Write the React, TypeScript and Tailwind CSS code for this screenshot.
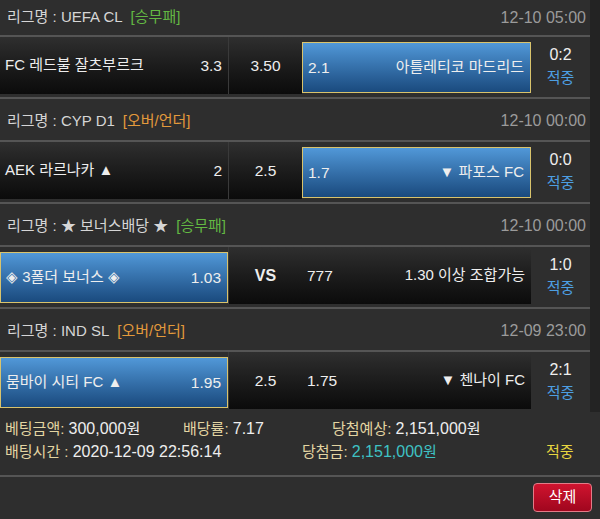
import React from "react"

type Side = {
  name: string
  odds: string
  blue?: boolean
}

type Bet = {
  league: string
  tag: string
  tagColor: string
  date: string
  home: Side
  mid: string
  midBold?: boolean
  away: Side
  score: string
}

const bets: Bet[] = [
  {
    league: "리그명 : UEFA CL",
    tag: "[승무패]",
    tagColor: "text-[#63b843]",
    date: "12-10 05:00",
    home: { name: "FC 레드불 잘츠부르크", odds: "3.3" },
    mid: "3.50",
    away: { name: "아틀레티코 마드리드", odds: "2.1", blue: true },
    score: "0:2",
  },
  {
    league: "리그명 : CYP D1",
    tag: "[오버/언더]",
    tagColor: "text-[#e39a3c]",
    date: "12-10 00:00",
    home: { name: "AEK 라르나카 ▲", odds: "2" },
    mid: "2.5",
    away: { name: "▼ 파포스 FC", odds: "1.7", blue: true },
    score: "0:0",
  },
  {
    league: "리그명 : ★ 보너스배당 ★",
    tag: "[승무패]",
    tagColor: "text-[#63b843]",
    date: "12-10 00:00",
    home: { name: "◈ 3폴더 보너스 ◈", odds: "1.03", blue: true },
    mid: "VS",
    midBold: true,
    away: { name: "1.30 이상 조합가능", odds: "777" },
    score: "1:0",
  },
  {
    league: "리그명 : IND SL",
    tag: "[오버/언더]",
    tagColor: "text-[#e39a3c]",
    date: "12-09 23:00",
    home: { name: "뭄바이 시티 FC ▲", odds: "1.95", blue: true },
    mid: "2.5",
    away: { name: "▼ 첸나이 FC", odds: "1.75" },
    score: "2:1",
  },
]

function cellClass(blue?: boolean) {
  return blue
    ? "mt-[5px] mb-[1px] bg-linear-to-b from-[#5198d8] to-[#1a4a7e] border border-[#d9c36c]"
    : "bg-linear-to-b from-[#2f2f2f] to-[#0b0b0b]"
}

function BetBlock({ bet, first }: { bet: Bet; first?: boolean }) {
  return (
    <div className={first ? "" : "border-t-2 border-[#555]"}>
      <div
        className={`${first ? "h-[35px]" : "h-[41px] pt-[3px]"} flex items-center justify-between px-[7px] pr-[4px] text-[15px]`}
      >
        <div className="flex items-center">
          <span className="text-[#d6d6d6]">{bet.league}</span>
          <span className={`ml-[8px] ${bet.tagColor}`}>{bet.tag}</span>
        </div>
        <span className="text-[16px] text-[#9b9b9b]">{bet.date}</span>
      </div>
      <div className="h-[2px] bg-[#555]" />
      <div className="h-[57px] flex text-[15px] text-[#eeeeee]">
        <div
          className={`w-[228px] flex items-center justify-between pl-[5px] pr-[6px] ${cellClass(bet.home.blue)}`}
        >
          <span>{bet.home.name}</span>
          <span className="text-[15.5px]">{bet.home.odds}</span>
        </div>
        <div
          className={`w-[74px] flex items-center justify-center bg-linear-to-b from-[#2f2f2f] to-[#0b0b0b] border-l border-[#3a3a3a] ${bet.midBold ? "font-bold text-[16px]" : "text-[15.5px]"}`}
        >
          {bet.mid}
        </div>
        <div
          className={`w-[229px] flex items-center justify-between pl-[5px] pr-[6px] ${cellClass(bet.away.blue)}`}
        >
          <span className="text-[15.5px]">{bet.away.odds}</span>
          <span>{bet.away.name}</span>
        </div>
        <div className="flex-1 flex flex-col items-center justify-center leading-[23px]">
          <span className="text-[16px]">{bet.score}</span>
          <span className="text-[#4d9fe2]">적중</span>
        </div>
      </div>
      <div className="h-[3px]" />
    </div>
  )
}

export default function App() {
  return (
    <div className="w-[600px] h-[519px] overflow-hidden bg-[#2e2e2e] font-['Liberation_Sans','Noto_Sans_CJK_KR',sans-serif]">
      <div className="bg-[#232323]">
        <div className="w-[590px] bg-[#2e2e2e]">
          {bets.map((b, i) => (
            <BetBlock key={i} bet={b} first={i === 0} />
          ))}
        </div>
      </div>

      <div className="pt-[5px] pb-[12px] pl-[5px] text-[15px] leading-[23px] text-[#eeeeee]">
        <div className="flex">
          <div className="w-[178px]">
            <span className="text-[#e3d5a2]">베팅금액: </span>
            <span className="text-[16px]">300,000</span>원
          </div>
          <div className="w-[149px]">
            <span className="text-[#e3d5a2]">배당률: </span>
            <span className="text-[16px]">7.17</span>
          </div>
          <div>
            <span className="text-[#e3d5a2]">당첨예상: </span>
            <span className="text-[16px]">2,151,000</span>원
          </div>
        </div>
        <div className="flex">
          <div className="w-[297px]">
            <span className="text-[#e3d5a2]">배팅시간 : </span>
            <span className="text-[16px]">2020-12-09 22:56:14</span>
          </div>
          <div className="w-[244px]">
            <span className="text-[#e3d5a2]">당첨금: </span>
            <span className="text-[#3ec2c4]">
              <span className="text-[16px]">2,151,000</span>원
            </span>
          </div>
          <div className="text-[#e6d640]">적중</div>
        </div>
      </div>

      <div className="border-t-2 border-[#555] flex justify-end pt-[6px] pr-[8px]">
        <button className="w-[59px] h-[29px] rounded-[4px] border border-[#e27c88] bg-linear-to-b from-[#d0142f] to-[#a0061e] text-[15px] text-white">
          삭제
        </button>
      </div>
    </div>
  )
}
